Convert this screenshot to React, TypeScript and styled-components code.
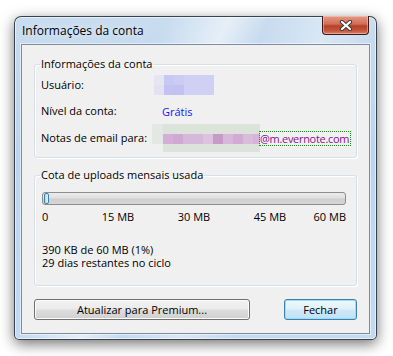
import React from "react";
import styled, { createGlobalStyle } from "styled-components";

const GlobalStyle = createGlobalStyle`
  html, body { margin: 0; padding: 0; background: #ffffff; }
  body { font-family: "Open Sans", "Noto Sans", sans-serif; font-size: 11px; color: #000; }
`;

const Page = styled.div`
  padding: 16px 0 0 14px;
  height: 340px;
`;

const Window = styled.div`
  width: 349px;
  padding: 0 6px 5px;
  border: 1px solid rgba(30, 40, 50, 0.85);
  border-radius: 7px 7px 5px 5px;
  background:
    linear-gradient(115deg, rgba(255,255,255,0) 30%, rgba(255,255,255,0.55) 42%, rgba(255,255,255,0) 50%, rgba(255,255,255,0.35) 62%, rgba(255,255,255,0) 72%),
    linear-gradient(180deg, #c9dcef 0%, #bcd5ee 40%, #c3daf1 100%);
  box-shadow: 0 4px 14px rgba(0, 0, 0, 0.55), inset 0 0 0 1px rgba(255,255,255,0.55);
`;

const TitleBar = styled.div`
  height: 27px;
  display: flex;
  align-items: center;
  justify-content: space-between;
`;

const Title = styled.span`
  padding-left: 1px;
  font-size: 12px;
  color: #000;
  text-shadow: 0 0 8px rgba(255,255,255,0.9);
`;

const CloseButton = styled.div`
  align-self: flex-start;
  margin-top: -1px;
  margin-right: 1px;
  width: 45px;
  height: 18px;
  border: 1px solid #3a1a16;
  border-top: none;
  border-radius: 0 0 4px 4px;
  display: flex;
  align-items: center;
  justify-content: center;
  background: linear-gradient(180deg, #e49a86 0%, #d16d55 45%, #b8402a 55%, #c4543a 80%, #d8826a 100%);
  box-shadow: inset 0 0 0 1px rgba(255, 220, 210, 0.45);
`;

const Client = styled.div`
  border: 1px solid #7d8d9c;
  background: #f0f0f0;
  padding: 12px 12px 13px;
  box-shadow: 0 0 0 1px rgba(255,255,255,0.5);
`;

const Group = styled.fieldset<{ $pad: string }>`
  margin: 0;
  padding: ${(p) => p.$pad};
  border: 1px solid #d5dfe5;
  border-radius: 3px;
  box-shadow: inset 1px 1px 0 #fff, 1px 1px 0 #fff;
  min-width: 0;
  & + & { margin-top: 10px; }
`;

const Legend = styled.legend`
  padding: 0 1px;
  margin-left: -1px;
  line-height: 14px;
`;

const Row = styled.div`
  height: 26px;
  display: grid;
  grid-template-columns: 111px 1fr;
  align-items: center;
`;

const Label = styled.span`
  line-height: 14px;
`;

const Value = styled.div`
  display: flex;
  align-items: center;
`;

const Link = styled.span<{ $offset?: number }>`
  color: #1515ff;
  margin-left: ${(p) => p.$offset ?? 0}px;
`;

const Email = styled.span`
  color: #8a1090;
  outline: 1px dotted #1a9a1a;
  outline-offset: 0;
  line-height: 13px;
  letter-spacing: -0.3px;
  padding: 0 1px 0 0;
`;

const Track = styled.div`
  margin: 10px 0 0 1px;
  width: 301px;
  height: 11px;
  border: 1px solid #8d8d8d;
  border-radius: 3px;
  background: linear-gradient(180deg, #ececec 0%, #e0e0e0 45%, #cfcfcf 55%, #d6d6d6 100%);
  display: flex;
  align-items: center;
  padding-left: 1px;
`;

const Thumb = styled.div`
  width: 3px;
  height: 9px;
  border: 1px solid #3c7fb1;
  border-radius: 2px;
  background: linear-gradient(90deg, #b5d7f0, #e6f3fb);
`;

const Scale = styled.div`
  margin: 5px 0 0 1px;
  width: 304px;
  display: grid;
  grid-template-columns: 1fr 2fr 2fr 2fr 1fr;
  line-height: 14px;
`;

const Tick = styled.span<{ $align: string }>`
  text-align: ${(p) => p.$align};
  white-space: nowrap;
`;

const Usage = styled.div`
  margin: 19px 0 0 1px;
  line-height: 13px;
`;

const Buttons = styled.div`
  margin-top: 13px;
  display: flex;
  justify-content: space-between;
`;

const Button = styled.button<{ $width: number; $default?: boolean }>`
  width: ${(p) => p.$width}px;
  height: 21px;
  padding: 0;
  font: inherit;
  color: #000;
  border-radius: 3px;
  border: 1px solid ${(p) => (p.$default ? "#3c7fb1" : "#707070")};
  background: ${(p) =>
    p.$default
      ? "linear-gradient(180deg, #eef7fd 0%, #e0f1fb 45%, #cde9f9 55%, #bfe2f6 100%)"
      : "linear-gradient(180deg, #f2f2f2 0%, #ebebeb 45%, #dddddd 55%, #cfcfcf 100%)"};
  box-shadow: inset 0 0 0 1px ${(p) => (p.$default ? "#9fdcf7" : "#fcfcfc")};
`;

const UserBlur = () => (
  <svg width="60" height="20" shapeRendering="crispEdges" style={{ marginLeft: 2 }}>
    <rect x="0" y="0" width="10" height="10" fill="#e6e6f2" />
    <rect x="0" y="10" width="10" height="10" fill="#e2e2f0" />
    <rect x="10" y="0" width="10" height="10" fill="#c8c8f4" />
    <rect x="10" y="10" width="10" height="10" fill="#c3c3f2" />
    <rect x="20" y="0" width="10" height="10" fill="#cbcbf4" />
    <rect x="20" y="10" width="10" height="10" fill="#c2c2f0" />
    <rect x="30" y="0" width="30" height="20" fill="#d0d0f5" />
  </svg>
);

const pinks = ["#d4aed6", "#d0a8d2", "#d8b8da", "#d8b8da", "#dcc2de", "#c89ac8", "#d8b8da", "#d2aad4", "#d8bcda", "#d6b4d8"];

const EmailBlur = () => (
  <svg width="108" height="28" shapeRendering="crispEdges">
    <rect x="0" y="0" width="11" height="20" fill="#e4e8e4" />
    <rect x="11" y="0" width="97" height="28" fill="#dbe3db" />
    {pinks.map((c, i) => (
      <rect key={i} x={11 + i * 10} y="10" width={i === 9 ? 7 : 10} height="10" fill={c} />
    ))}
  </svg>
);

export default function App() {
  return (
    <>
      <GlobalStyle />
      <Page>
        <Window>
          <TitleBar>
            <Title>Informações da conta</Title>
            <CloseButton>
              <svg width="14" height="11" viewBox="0 0 14 11">
                <path d="M3 2 L11 9 M11 2 L3 9" stroke="#3b3b3b" strokeWidth="4.2" strokeLinecap="round" />
                <path d="M3 2 L11 9 M11 2 L3 9" stroke="#ffffff" strokeWidth="2.2" strokeLinecap="round" />
              </svg>
            </CloseButton>
          </TitleBar>
          <Client>
            <Group $pad="1px 0 7px 6px">
              <Legend>Informações da conta</Legend>
              <Row>
                <Label>Usuário:</Label>
                <Value>
                  <UserBlur />
                </Value>
              </Row>
              <Row>
                <Label>Nível da conta:</Label>
                <Value>
                  <Link $offset={10}>Grátis</Link>
                </Value>
              </Row>
              <Row>
                <Label>Notas de email para:</Label>
                <Value>
                  <EmailBlur />
                  <Email>@m.evernote.com</Email>
                </Value>
              </Row>
            </Group>
            <Group $pad="0 0 16px 6px">
              <Legend>Cota de uploads mensais usada</Legend>
              <Track>
                <Thumb />
              </Track>
              <Scale>
                <Tick $align="left">0</Tick>
                <Tick $align="center">15 MB</Tick>
                <Tick $align="center">30 MB</Tick>
                <Tick $align="center">45 MB</Tick>
                <Tick $align="right">60 MB</Tick>
              </Scale>
              <Usage>
                390 KB de 60 MB (1%)
                <br />
                29 dias restantes no ciclo
              </Usage>
            </Group>
            <Buttons>
              <Button $width={216}>Atualizar para Premium...</Button>
              <Button $width={73} $default>
                Fechar
              </Button>
            </Buttons>
          </Client>
        </Window>
      </Page>
    </>
  );
}
